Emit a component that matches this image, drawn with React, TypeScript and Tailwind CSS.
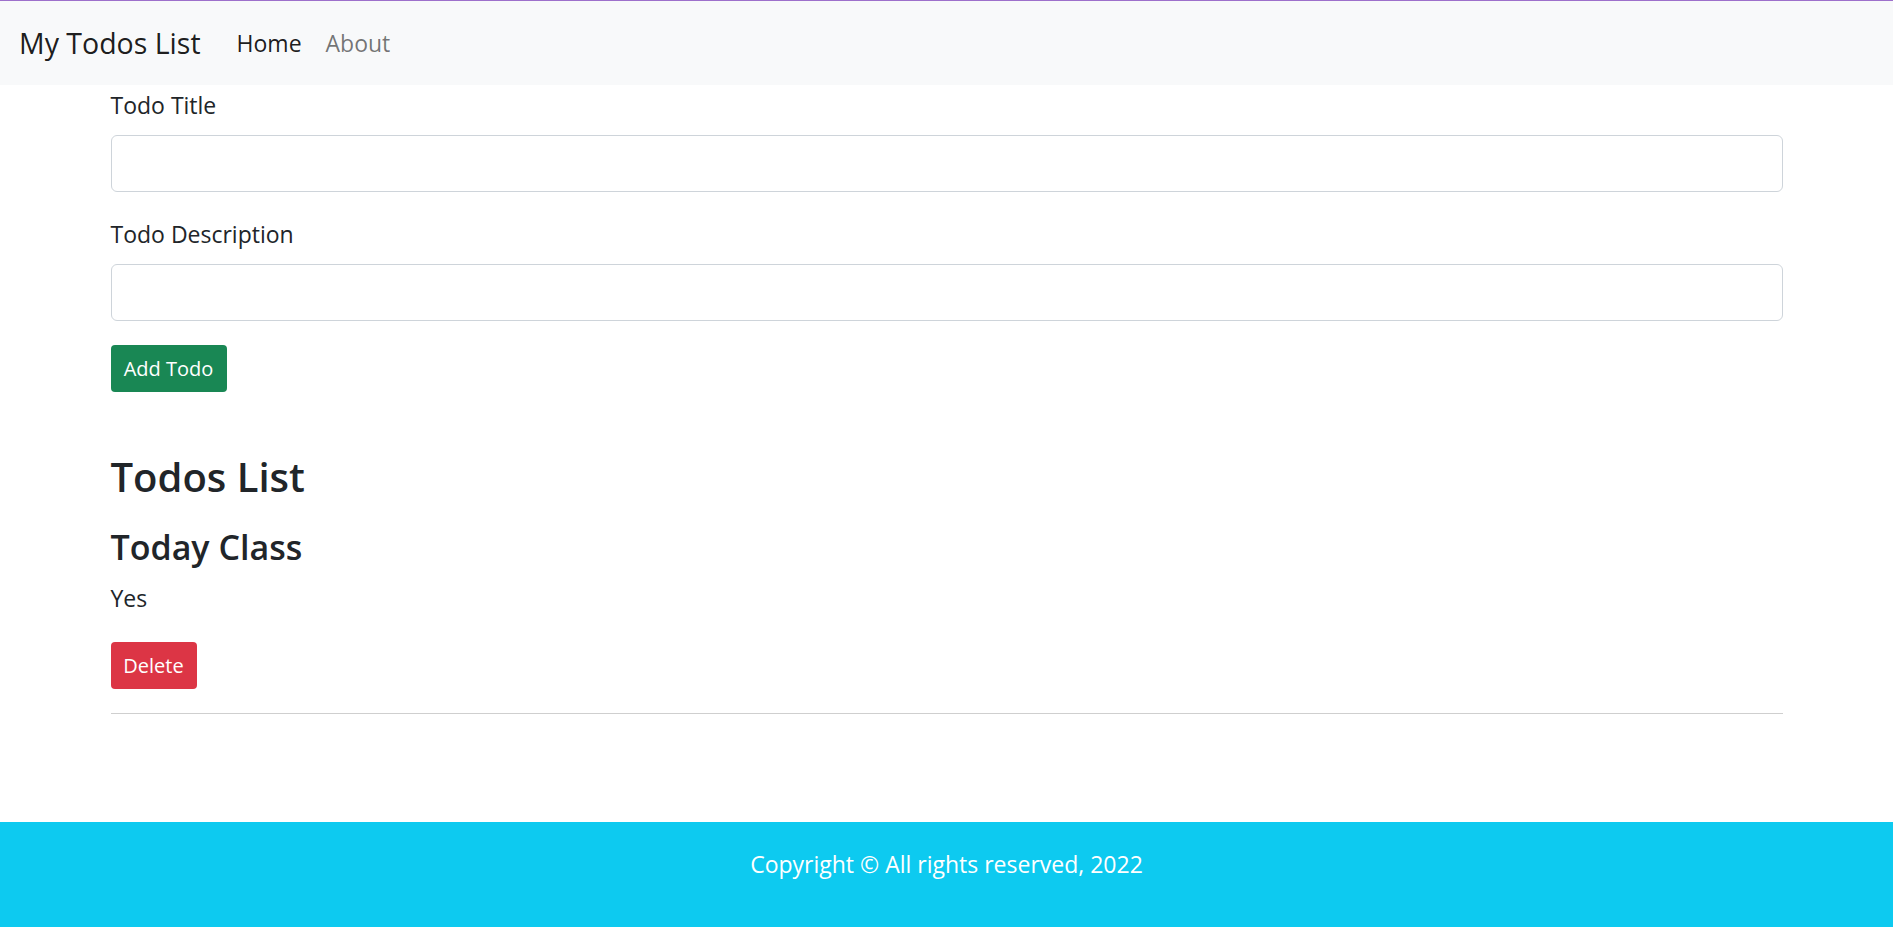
const App = () => {
  return (
    <div className="min-h-screen bg-white font-['Open_Sans',sans-serif] text-[#212529]">
      <div className="h-px bg-[#9d70cb]" />
      <nav className="flex h-[84px] items-center bg-[#f8f9fa] px-[19px]">
        <a href="#" className="mr-6 text-[28.5px] leading-[45px] text-black/90">
          My Todos List
        </a>
        <a href="#" className="px-3 text-[23px] leading-9 text-black/90">
          Home
        </a>
        <a href="#" className="px-3 text-[23px] leading-9 text-black/55">
          About
        </a>
      </nav>

      <div className="mx-auto w-[1672px] pt-0.5">
        <form>
          <label className="mb-3 block text-[23px] leading-9">Todo Title</label>
          <input
            type="text"
            className="mb-6 block h-[57px] w-full rounded-[6px] border-[1.5px] border-[#ced4da] px-[18px] text-[23px] outline-none"
          />
          <label className="mb-3 block text-[23px] leading-9">
            Todo Description
          </label>
          <input
            type="text"
            className="mb-6 block h-[57px] w-full rounded-[6px] border-[1.5px] border-[#ced4da] px-[18px] text-[23px] outline-none"
          />
          <button
            type="button"
            className="h-[47px] w-[116px] rounded-[4px] bg-[#198754] text-[20px] leading-[31px] text-white"
          >
            Add Todo
          </button>
        </form>

        <h3 className="mt-[60px] mb-6 text-[40px] font-semibold leading-[50px]">
          Todos List
        </h3>
        <div>
          <h4 className="mb-[11px] text-[34px] font-semibold leading-[43px]">
            Today Class
          </h4>
          <p className="mb-[26px] text-[23px] leading-9">Yes</p>
          <button
            type="button"
            className="h-[47px] w-[86px] rounded-[4px] bg-[#dc3545] text-[20px] leading-[31px] text-white"
          >
            Delete
          </button>
          <hr className="mt-6 border-t-[1.5px] border-[#cfcfcf]" />
        </div>
      </div>

      <footer className="mt-[108px] bg-[#0dcaf0] pt-6 pb-12 text-center text-white">
        <p className="text-[23px] leading-9">
          Copyright © All rights reserved, 2022
        </p>
      </footer>
    </div>
  );
};

export default App;
